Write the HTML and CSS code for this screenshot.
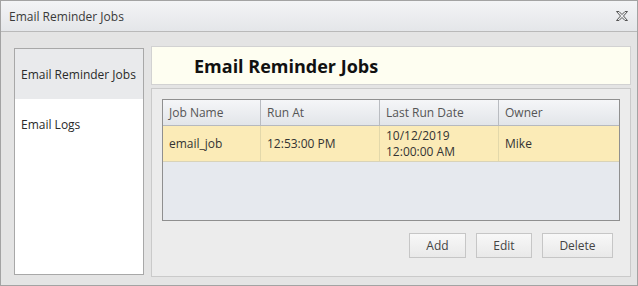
FILE: index.html
```html
<!DOCTYPE html>
<html lang="en">
<head>
    <meta charset="UTF-8">
    <title>Email Reminder Jobs</title>
    <link rel="stylesheet" href="styles.css">
</head>
<body>
    <div class="window">
        <div class="titlebar">
            <span class="title">Email Reminder Jobs</span>
            <svg class="close" width="12" height="10" viewBox="0 0 12 10">
                <path d="M0.5 0.5 H3 L6 3.5 L9 0.5 H11.5 L7.5 5 L11.5 9.5 H9 L6 6.5 L3 9.5 H0.5 L4.5 5 Z" fill="none" stroke="#555" stroke-width="1"/>
            </svg>
        </div>
        <div class="content">
            <div class="nav">
                <div class="nav-item active">Email Reminder Jobs</div>
                <div class="nav-item">Email Logs</div>
            </div>
            <div class="main">
                <div class="heading">Email Reminder Jobs</div>
                <div class="panel">
                    <div class="grid">
                        <div class="row head">
                            <div class="cell">Job Name</div>
                            <div class="cell">Run At</div>
                            <div class="cell">Last Run Date</div>
                            <div class="cell">Owner</div>
                        </div>
                        <div class="row selected">
                            <div class="cell">email_job</div>
                            <div class="cell">12:53:00 PM</div>
                            <div class="cell two-line">
                                <span>10/12/2019</span>
                                <span>12:00:00 AM</span>
                            </div>
                            <div class="cell">Mike</div>
                        </div>
                    </div>
                    <div class="actions">
                        <button class="btn btn-add">Add</button>
                        <button class="btn btn-edit">Edit</button>
                        <button class="btn btn-delete">Delete</button>
                    </div>
                </div>
            </div>
        </div>
    </div>
</body>
</html>
```

FILE: styles.css
```css
body {
    margin: 0;
    font-family: "Open Sans", "DejaVu Sans", sans-serif;
    font-size: 12px;
    color: #333;
    background-color: #fff;
}
.window {
    width: 638px;
    height: 286px;
    box-sizing: border-box;
    border: 1px solid #a3a3a3;
    background-color: #e4e4e4;
    display: flex;
    flex-direction: column;
}
.titlebar {
    height: 30px;
    border-bottom: 1px solid #b9b9b9;
    background: linear-gradient(#f3f4f6, #e4e6e9);
    display: flex;
    align-items: center;
    justify-content: space-between;
    padding: 0 9px 0 8px;
}
.title {
    color: #3a3a3a;
}
.close {
    display: block;
}
.content {
    flex: 1;
    display: flex;
    gap: 7px;
    padding: 14px 6px 8px 13px;
    min-height: 0;
}
.nav {
    width: 130px;
    box-sizing: border-box;
    margin-top: 2px;
    margin-bottom: 2px;
    border: 1px solid #a8a8a8;
    background-color: #fff;
}
.nav-item {
    height: 50px;
    display: flex;
    align-items: center;
    padding-left: 6px;
    color: #2a2a2a;
}
.nav-item.active {
    background-color: #e9eaec;
}
.main {
    flex: 1;
    display: flex;
    flex-direction: column;
    gap: 3px;
}
.heading {
    height: 37px;
    border: 1px solid #d2d2d2;
    background-color: #fefef1;
    display: flex;
    align-items: center;
    padding-left: 42px;
    font-size: 18px;
    font-weight: bold;
    color: #111;
}
.panel {
    flex: 1;
    border: 1px solid #cacaca;
    background-color: #ececec;
    padding: 10px;
    display: flex;
    flex-direction: column;
}
.grid {
    height: 122px;
    box-sizing: border-box;
    border: 1px solid #8f8f8f;
    background-color: #e6e9ee;
}
.row {
    display: grid;
    grid-template-columns: 98px 119px 119px 1fr;
}
.row .cell {
    border-right: 1px solid #c9ccd1;
    padding-left: 6px;
    display: flex;
    align-items: center;
}
.row .cell:last-child {
    border-right: none;
}
.row .two-line {
    flex-direction: column;
    align-items: flex-start;
    justify-content: center;
    line-height: 16px;
}
.head {
    height: 26px;
    box-sizing: border-box;
    border-bottom: 1px solid #b6b9be;
    background: linear-gradient(#f5f6f8, #e2e5e9);
    color: #555;
}
.head .cell {
    border-right-color: #b9bcc1;
}
.selected {
    height: 36px;
    box-sizing: border-box;
    border-bottom: 1px solid #d9d3b8;
    background-color: #fbebb7;
    color: #333;
}
.selected .cell {
    border-right-color: #e3d8aa;
}
.actions {
    display: flex;
    justify-content: flex-end;
    gap: 10px;
    margin-top: 12px;
    padding-right: 7px;
}
.btn {
    height: 25px;
    border: 1px solid #c6c6c6;
    background: linear-gradient(#f8f8f8, #e9e9e9);
    font-family: inherit;
    font-size: 12px;
    color: #444;
    padding: 0;
}
.btn-add {
    width: 57px;
}
.btn-edit {
    width: 56px;
}
.btn-delete {
    width: 71px;
}
```
